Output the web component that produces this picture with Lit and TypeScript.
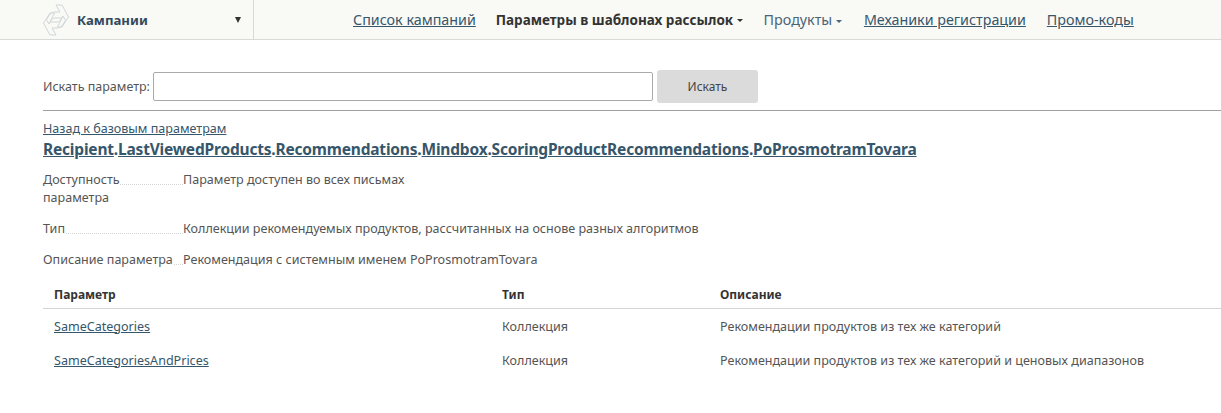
import { LitElement, html, css } from "lit";
import { customElement } from "lit/decorators.js";

@customElement("app-root")
export class AppRoot extends LitElement {
  static styles = css`
    :host { display: block; font-family: "Noto Sans", "Open Sans", sans-serif; font-size: 12.55px; color: #555; background: #fff; height: 413px; overflow: hidden; }
    a { color: #36566b; text-decoration: underline; }
    .top { display: flex; height: 39px; background: #f9f9f5; border-bottom: 1px solid #d9d9d9; }
    .brand { width: 254px; box-sizing: border-box; padding: 0 12px 0 43px; border-right: 1px solid #d9d9d9; display: flex; align-items: center; gap: 8px; }
    .brand svg { flex: none; }
    .brand b { font-size: 13.2px; color: #33495c; flex: 1; }
    .caret { width: 0; height: 0; border-left: 3.5px solid transparent; border-right: 3.5px solid transparent; border-top: 6px solid #333; }
    nav { display: flex; align-items: center; padding-left: 99px; gap: 20px; font-size: 14.3px; white-space: nowrap; }
    nav .cur { font-weight: 700; color: #333; font-size: 13.5px; margin-right: 1px; }
    nav .menu { color: #4a6478; margin-right: 2px; }
    nav .mech { margin-right: 1px; }
    .small { display: inline-block; vertical-align: middle; margin-left: 0; border-left: 3.5px solid transparent; border-right: 3.5px solid transparent; border-top: 3.5px solid currentColor; }
    main { padding: 29px 0 0 43px; }
    .search { display: flex; align-items: center; height: 34px; }
    .search label { width: 110px; font-size: 12.5px; }
    .search input { width: 500px; height: 29px; box-sizing: border-box; border: 1px solid #aaa; border-radius: 2px; background: #fff; padding: 0; margin: 0; }
    .search button { width: 101px; height: 33px; margin-left: 4px; border: 0; border-radius: 3px; background: #dbdbdb; font: inherit; font-size: 12px; color: #444; }
    hr { border: 0; border-top: 1px solid #a0a0a0; margin: 7px 0 0; }
    .back { display: block; margin-top: 10px; line-height: 16px; }
    h1 { margin: 2px 0 0; font-size: 15.5px; letter-spacing: -0.19px; line-height: 20px; font-weight: 700; color: #36566b; }
    dl { margin: 12px 0 0; }
    .row { display: flex; margin-bottom: 13px; line-height: 18px; }
    dt { width: 140px; flex: none; position: relative; }
    dd { margin: 0; }
    dt span { background: #fff; position: relative; display: inline-block; }
    dt::before { content: ""; position: absolute; left: 0; right: 0; top: 13px; border-bottom: 1px dotted #d4d4d4; }
    table { border-collapse: collapse; width: 100%; margin-top: -2px; table-layout: fixed; }
    th { text-align: left; font-size: 12px; color: #333; height: 28px; padding: 0 0 0 11px; border-bottom: 1px solid #d5d5d5; }
    td { padding: 1px 0 0 11px; height: 34px; box-sizing: border-box; }
  `;
  render() {
    const arrow = "M13 1 L19 1 L25.5 13 L19 23 L14.5 23 L19 14 L12 14 C10 14 9 15 8 16.5 L6 20 L3.5 15.5 L6.5 11 C8 9 10 8 12 8 L17 8 Z";
    return html`
      <div class="top">
        <div class="brand">
          <svg width="26" height="32" viewBox="0 0 26 32" fill="none" stroke="#d0d7da" stroke-width="1" stroke-linejoin="round">
            <path d=${arrow}></path>
            <path transform="rotate(180 13 16)" d=${arrow}></path>
          </svg>
          <b>Кампании</b><span class="caret"></span>
        </div>
        <nav>
          <a href="#">Список кампаний</a>
          <span class="cur">Параметры в шаблонах рассылок <i class="small"></i></span>
          <span class="menu">Продукты <i class="small"></i></span>
          <a class="mech" href="#">Механики регистрации</a>
          <a href="#">Промо-коды</a>
        </nav>
      </div>
      <main>
        <div class="search">
          <label>Искать параметр:</label>
          <input type="text" />
          <button>Искать</button>
        </div>
        <hr />
        <a class="back" href="#">Назад к базовым параметрам</a>
        <h1><a href="#">Recipient</a>.<a href="#">LastViewedProducts</a>.<a href="#">Recommendations</a>.<a href="#">Mindbox</a>.<a href="#">ScoringProductRecommendations</a>.<a href="#">PoProsmotramTovara</a></h1>
        <dl>
          <div class="row"><dt><span>Доступность<br />параметра</span></dt><dd>Параметр доступен во всех письмах</dd></div>
          <div class="row"><dt><span>Тип</span></dt><dd>Коллекции рекомендуемых продуктов, рассчитанных на основе разных алгоритмов</dd></div>
          <div class="row"><dt><span>Описание параметра</span></dt><dd>Рекомендация с системным именем PoProsmotramTovara</dd></div>
        </dl>
        <table>
          <colgroup><col style="width:448px" /><col style="width:218px" /><col /></colgroup>
          <tr><th>Параметр</th><th>Тип</th><th>Описание</th></tr>
          <tr><td><a href="#">SameCategories</a></td><td>Коллекция</td><td>Рекомендации продуктов из тех же категорий</td></tr>
          <tr><td><a href="#">SameCategoriesAndPrices</a></td><td>Коллекция</td><td>Рекомендации продуктов из тех же категорий и ценовых диапазонов</td></tr>
        </table>
      </main>
    `;
  }
}
